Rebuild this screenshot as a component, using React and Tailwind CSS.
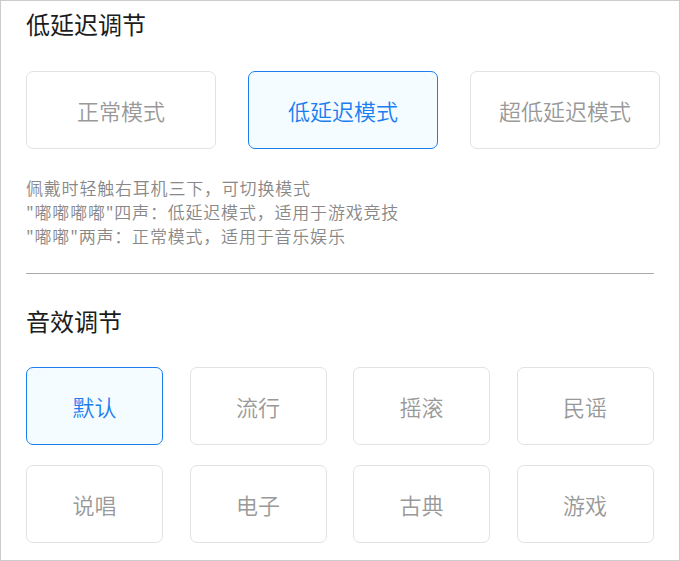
import React, { useState } from "react";

const font = { fontFamily: '"Noto Sans CJK SC", "Noto Sans", sans-serif' };

const latencyModes = ["正常模式", "低延迟模式", "超低延迟模式"];
const soundModes = ["默认", "流行", "摇滚", "民谣", "说唱", "电子", "古典", "游戏"];

const OptionButton = ({ label, active, onClick, className }) => (
  <button
    onClick={onClick}
    className={`h-[78px] rounded-[7px] flex items-center justify-center text-[22px] font-[350] ${className} ${
      active
        ? "border-[1.5px] border-[#1a7df0] bg-[#f5fcff] text-[#1a7df0]"
        : "border-[1.5px] border-[#e2e2e2] bg-white text-[#999999]"
    }`}
  >
    {label}
  </button>
);

export default function App() {
  const [latency, setLatency] = useState(1);
  const [sound, setSound] = useState(0);

  return (
    <div style={font} className="w-[680px] h-[561px] bg-white border border-[#cccccc] overflow-hidden">
      <div className="pl-[25px] pr-[19px] pt-[8px]">
        {/* 低延迟调节 */}
        <h2 className="text-[24px] leading-[30px] font-normal text-[#1c1c1c]">低延迟调节</h2>
        <div className="mt-[32px] flex gap-[32px]">
          {latencyModes.map((m, i) => (
            <OptionButton
              key={m}
              label={m}
              active={latency === i}
              onClick={() => setLatency(i)}
              className="w-[190px]"
            />
          ))}
        </div>
        <div className="mt-[27px] text-[17px] leading-[24px] tracking-[0.8px] font-[350] text-[#888888]">
          <p>佩戴时轻触右耳机三下，可切换模式</p>
          <p>"嘟嘟嘟嘟"四声：低延迟模式，适用于游戏竞技</p>
          <p>"嘟嘟"两声：正常模式，适用于音乐娱乐</p>
        </div>
        <div className="mt-[25px] h-px w-[628px] bg-[#a8a8a8]" />

        {/* 音效调节 */}
        <h2 className="mt-[32px] text-[24px] leading-[30px] font-normal text-[#1c1c1c]">音效调节</h2>
        <div className="mt-[31px] grid grid-cols-[repeat(4,137px)] gap-x-[26.5px] gap-y-[20px]">
          {soundModes.map((m, i) => (
            <OptionButton
              key={m}
              label={m}
              active={sound === i}
              onClick={() => setSound(i)}
              className="w-[137px]"
            />
          ))}
        </div>
      </div>
    </div>
  );
}
